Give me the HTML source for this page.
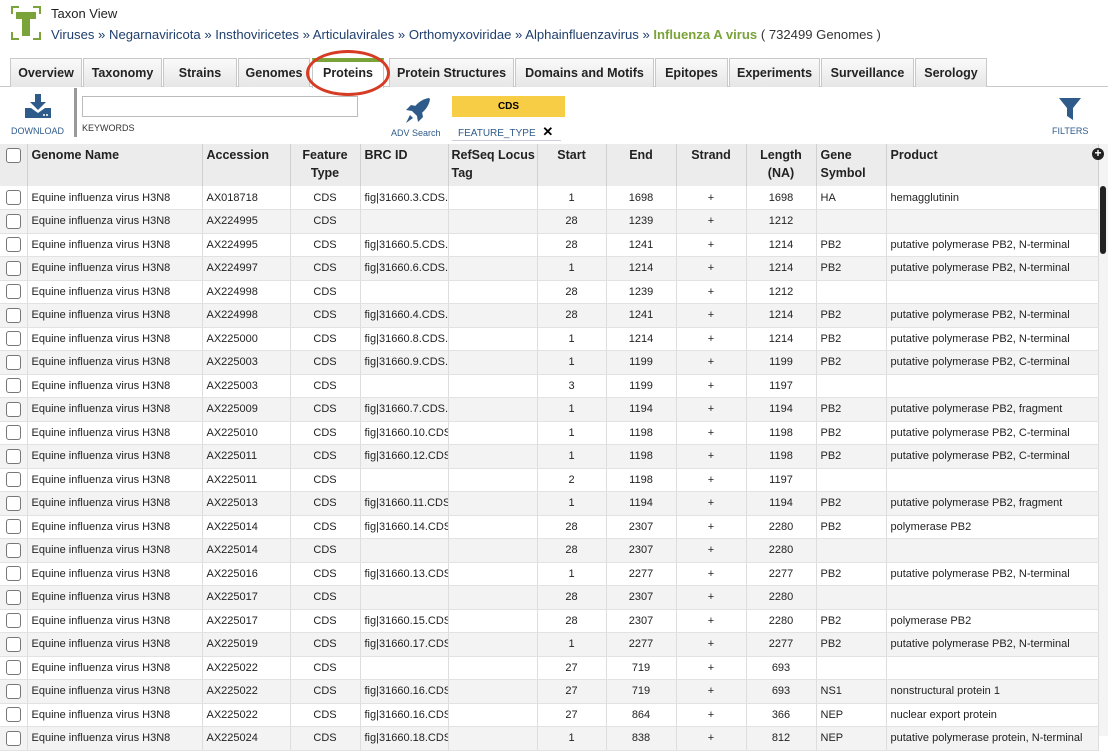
<!DOCTYPE html><html><head><style>
*{box-sizing:border-box}body{margin:0;width:1108px;height:736px;overflow:hidden;font-family:"Liberation Sans",Arial,sans-serif;background:#fff;position:relative}
.a{position:absolute}
.tab{position:absolute;top:58px;height:29px;border:1px solid #c8c8c8;border-bottom:none;background:linear-gradient(#fafafa,#e6e6e6);font-size:12.5px;font-weight:bold;color:#222;text-align:center;line-height:28px;white-space:nowrap}
table{position:absolute;left:0;top:144px;border-collapse:collapse;table-layout:fixed;width:1098px;font-size:11px;color:#222}
td,th{border-right:1px solid #ddd;padding:0 4px;overflow:hidden}
td{white-space:nowrap}
th{background:#ececec;font-size:12.5px;text-align:left;vertical-align:top;height:42px;line-height:18px;padding-top:2px;border-right:1px solid #d0d0d0;white-space:nowrap}
td{height:23.5px;border-bottom:1px solid #e2e2e2}
tr.g td{background:#f3f3f3}
.c{text-align:center}
.cb{display:inline-block;width:15px;height:15px;border:1px solid #777;border-radius:3px;background:#fff;vertical-align:middle}
</style></head><body>
<svg class="a" style="left:11px;top:6px" width="30" height="34" viewBox="0 0 30 34"><path d="M1 8V1H8M22 1H29V8M1 26V33H8M22 33H29V26" stroke="#7aa33a" stroke-width="2" fill="none"/><path d="M5 6H25V13H19V30H11V13H5Z" fill="#7aa33a"/></svg>
<div class="a" style="left:51px;top:6px;font-size:13px;color:#222">Taxon View</div>
<div class="a" style="left:51px;top:27px;font-size:13.1px;color:#1f3f6e;white-space:nowrap">Viruses » Negarnaviricota » Insthoviricetes » Articulavirales » Orthomyxoviridae » Alphainfluenzavirus » <b style="color:#7aa33a">Influenza A virus</b> <span style="color:#333">( 732499 Genomes )</span></div>
<div class="a" style="left:0;top:86px;width:1108px;height:1px;background:#c8c8c8"></div>
<div class="tab" style="left:10px;width:72px">Overview</div>
<div class="tab" style="left:83px;width:79px">Taxonomy</div>
<div class="tab" style="left:163px;width:74px">Strains</div>
<div class="tab" style="left:238px;width:72px">Genomes</div>
<div class="tab" style="left:312px;width:72px;background:#fff;height:30px;border-top:4px solid #7aa33a;line-height:22px">Proteins</div>
<div class="tab" style="left:389px;width:125px">Protein Structures</div>
<div class="tab" style="left:515px;width:139px">Domains and Motifs</div>
<div class="tab" style="left:655px;width:73px">Epitopes</div>
<div class="tab" style="left:729px;width:91px">Experiments</div>
<div class="tab" style="left:821px;width:93px">Surveillance</div>
<div class="tab" style="left:915px;width:72px">Serology</div>
<div class="a" style="left:306px;top:50px;width:84px;height:46px;border:3px solid #d63b23;border-radius:50%"></div>
<svg class="a" style="left:23px;top:94px" width="30" height="26" viewBox="0 0 30 26"><path d="M12 0H18V8H23L15 16L7 8H12Z" fill="#2f5b8a"/><path d="M2 14H8L15 19L22 14H28V24H2Z" fill="#2f5b8a"/><circle cx="21" cy="21" r="1" fill="#fff"/><circle cx="24" cy="21" r="1" fill="#fff"/></svg>
<div class="a" style="left:11px;top:126px;font-size:9px;color:#2f5b8a">DOWNLOAD</div>
<div class="a" style="left:74px;top:88px;width:3px;height:49px;background:#999"></div>
<div class="a" style="left:82px;top:96px;width:276px;height:21px;border:1px solid #bbb"></div>
<div class="a" style="left:82px;top:123px;font-size:9px;color:#333">KEYWORDS</div>
<svg class="a" style="left:403px;top:97px" width="28" height="28" viewBox="0 0 28 28"><path d="M26 1C18 2 12 8 9 14L14 19C20 16 26 10 27 2Z" fill="#2f5b8a"/><path d="M9 14L3 13L8 8L13 9ZM14 19L15 25L20 20L19 15Z" fill="#2f5b8a"/><path d="M7 18L3 26L10 21Z" fill="#2f5b8a"/></svg>
<div class="a" style="left:391px;top:128px;font-size:9px;color:#2f5b8a">ADV Search</div>
<div class="a" style="left:452px;top:96px;width:113px;height:21px;background:#f7cd45;font-size:10px;font-weight:bold;text-align:center;line-height:21px">CDS</div>
<div class="a" style="left:458px;top:124px;font-size:10px;color:#2f5b8a">FEATURE_TYPE <b style="color:#000;font-size:13px;margin-left:4px">✕</b></div>
<div class="a" style="left:452px;top:140px;width:109px;height:1px;background:#ccd"></div>
<svg class="a" style="left:1058px;top:97px" width="24" height="24" viewBox="0 0 24 24"><path d="M1 1H23L15 11V23L9 19V11Z" fill="#2f5b8a"/></svg>
<div class="a" style="left:1052px;top:126px;font-size:9px;color:#2f5b8a">FILTERS</div>
<div class="a" style="left:1098px;top:144px;width:10px;height:592px;background:#f4f4f4"></div>
<div class="a" style="left:1100px;top:186px;width:6px;height:68px;background:#222;border-radius:3px"></div>
<div class="a" style="left:1092px;top:148px;width:12px;height:12px;border-radius:50%;background:#222;color:#fff;font-size:12px;line-height:11px;text-align:center;font-weight:bold;z-index:2">+</div>
<table>
<colgroup><col style="width:27px"><col style="width:175px"><col style="width:88px"><col style="width:70px"><col style="width:88px"><col style="width:89px"><col style="width:69px"><col style="width:70px"><col style="width:70px"><col style="width:70px"><col style="width:70px"><col style="width:212px"></colgroup>
<tr><th style="padding:2px 0 0 6px"><span class="cb"></span></th><th>Genome Name</th><th>Accession</th><th class="c">Feature<br>Type</th><th>BRC ID</th><th style="padding-left:3px">RefSeq Locus<br>Tag</th><th class="c">Start</th><th class="c">End</th><th class="c">Strand</th><th class="c">Length<br>(NA)</th><th>Gene<br>Symbol</th><th>Product</th></tr>
<tbody id="b"></tbody></table>
<script>
var d=[["AX018718","fig|31660.3.CDS.","1","1698","1698","HA","hemagglutinin"],["AX224995","","28","1239","1212","",""],["AX224995","fig|31660.5.CDS.","28","1241","1214","PB2","putative polymerase PB2, N-terminal"],["AX224997","fig|31660.6.CDS.","1","1214","1214","PB2","putative polymerase PB2, N-terminal"],["AX224998","","28","1239","1212","",""],["AX224998","fig|31660.4.CDS.","28","1241","1214","PB2","putative polymerase PB2, N-terminal"],["AX225000","fig|31660.8.CDS.","1","1214","1214","PB2","putative polymerase PB2, N-terminal"],["AX225003","fig|31660.9.CDS.","1","1199","1199","PB2","putative polymerase PB2, C-terminal"],["AX225003","","3","1199","1197","",""],["AX225009","fig|31660.7.CDS.","1","1194","1194","PB2","putative polymerase PB2, fragment"],["AX225010","fig|31660.10.CDS","1","1198","1198","PB2","putative polymerase PB2, C-terminal"],["AX225011","fig|31660.12.CDS","1","1198","1198","PB2","putative polymerase PB2, C-terminal"],["AX225011","","2","1198","1197","",""],["AX225013","fig|31660.11.CDS","1","1194","1194","PB2","putative polymerase PB2, fragment"],["AX225014","fig|31660.14.CDS","28","2307","2280","PB2","polymerase PB2"],["AX225014","","28","2307","2280","",""],["AX225016","fig|31660.13.CDS","1","2277","2277","PB2","putative polymerase PB2, N-terminal"],["AX225017","","28","2307","2280","",""],["AX225017","fig|31660.15.CDS","28","2307","2280","PB2","polymerase PB2"],["AX225019","fig|31660.17.CDS","1","2277","2277","PB2","putative polymerase PB2, N-terminal"],["AX225022","","27","719","693","",""],["AX225022","fig|31660.16.CDS","27","719","693","NS1","nonstructural protein 1"],["AX225022","fig|31660.16.CDS","27","864","366","NEP","nuclear export protein"],["AX225024","fig|31660.18.CDS","1","838","812","NEP","putative polymerase protein, N-terminal"]];
var h="";d.forEach(function(r,i){h+='<tr'+(i%2?' class="g"':'')+'><td style="padding-left:6px"><span class="cb"></span></td><td>Equine influenza virus H3N8</td><td>'+r[0]+'</td><td class="c">CDS</td><td>'+r[1]+'</td><td></td><td class="c">'+r[2]+'</td><td class="c">'+r[3]+'</td><td class="c">+</td><td class="c">'+r[4]+'</td><td>'+r[5]+'</td><td>'+r[6]+'</td></tr>'});document.getElementById("b").innerHTML=h;
</script>
</body></html>
